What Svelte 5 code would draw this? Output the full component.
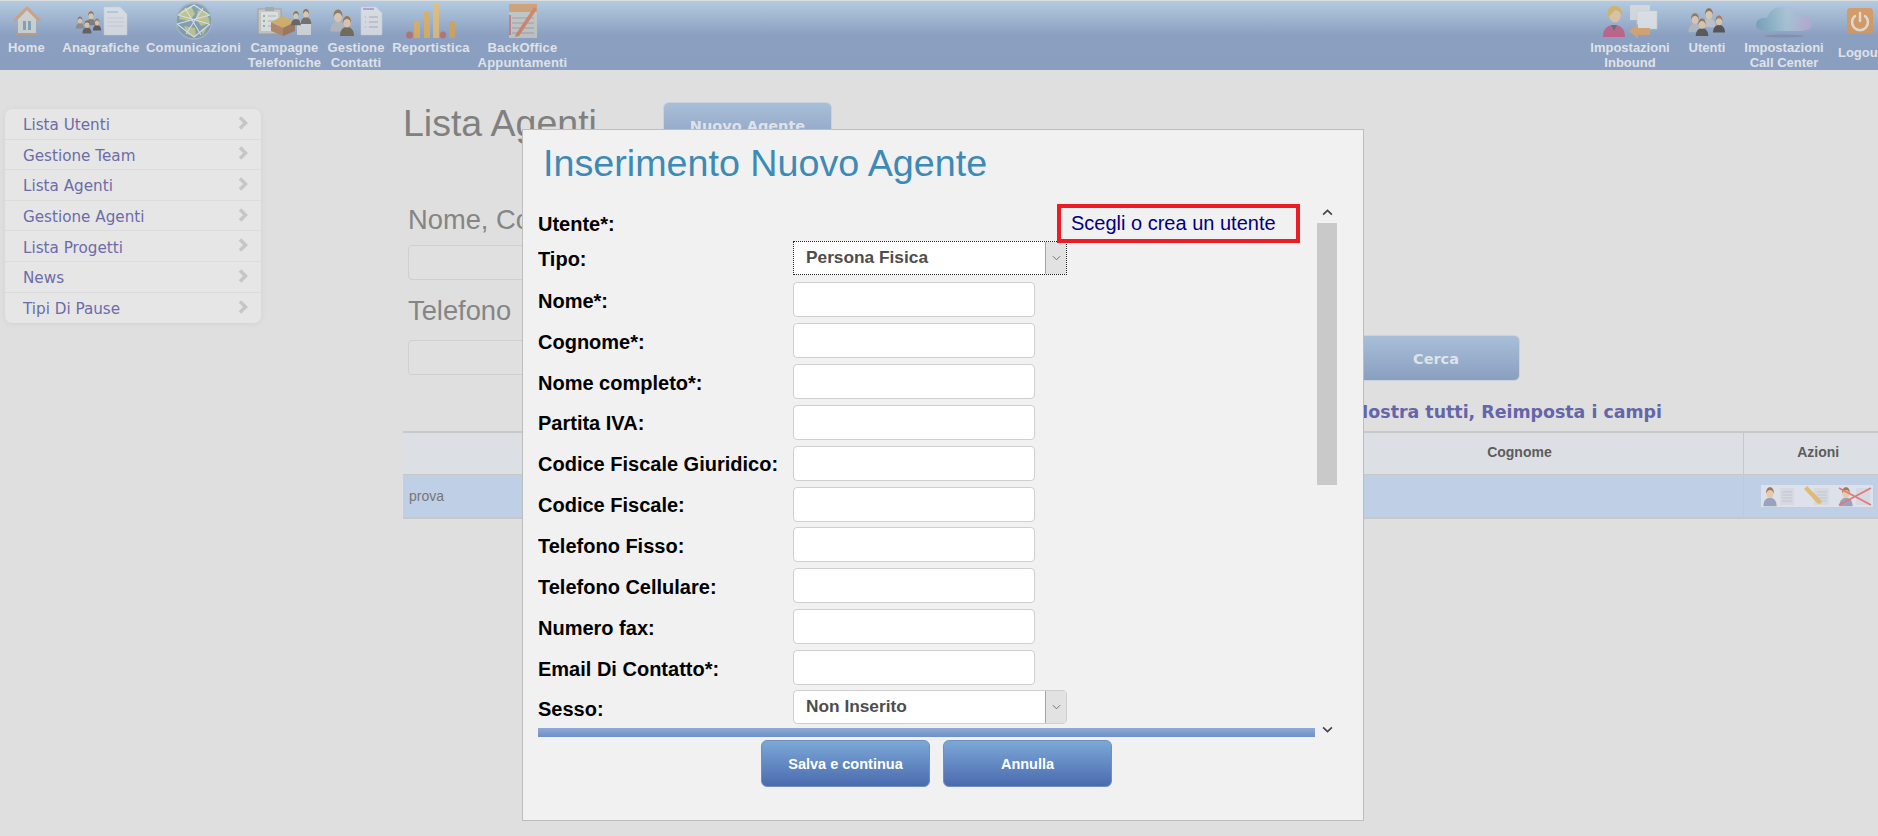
<script>
  const leftNav = [
    { id: 'home', label: ['Home'], width: 37, icon: 30, gap: 0 },
    { id: 'people-doc', label: ['Anagrafiche'], width: 78, icon: 54, gap: 17 },
    { id: 'globe', label: ['Comunicazioni'], width: 97, icon: 40, gap: 5 },
    { id: 'campaign', label: ['Campagne', 'Telefoniche'], width: 71, icon: 56, gap: 7 },
    { id: 'contacts', label: ['Gestione', 'Contatti'], width: 56, icon: 54, gap: 8 },
    { id: 'bars', label: ['Reportistica'], width: 76, icon: 50, gap: 9 },
    { id: 'notes', label: ['BackOffice', 'Appuntamenti'], width: 89, icon: 32, gap: 9 }
  ];
  const rightNav = [
    { id: 'inbound', label: ['Impostazioni', 'Inbound'], width: 82, icon: 56, gap: 0 },
    { id: 'users', label: ['Utenti'], width: 38, icon: 40, gap: 17 },
    { id: 'cloud', label: ['Impostazioni', 'Call Center'], width: 82, icon: 58, gap: 17 },
    { id: 'power', label: ['Logout'], width: 44, icon: 28, gap: 13 }
  ];
  const sideItems = ['Lista Utenti', 'Gestione Team', 'Lista Agenti', 'Gestione Agenti', 'Lista Progetti', 'News', 'Tipi Di Pause'];
  const textFields = ['Nome*:', 'Cognome*:', 'Nome completo*:', 'Partita IVA:', 'Codice Fiscale Giuridico:', 'Codice Fiscale:', 'Telefono Fisso:', 'Telefono Cellulare:', 'Numero fax:', 'Email Di Contatto*:'];
</script>

{#snippet person(x, y, s, hair, body)}
  <g transform="translate({x} {y}) scale({s})">
    <path d="M-7 16c0-6 3-9 7-9s7 3 7 9z" fill={body} />
    <ellipse cx="0" cy="3" rx="3.6" ry="4.4" fill="#e8c9a8" />
    <path d="M-4 3c-.5-5 2-7 4-7s4.500 2 4 7c-1-3-2-4-4-4s-3 1-4 4z" fill={hair} />
  </g>
{/snippet}

{#snippet doc(x, y, w, h)}
  <path d="M{x} {y}h{w - 7}l7 7v{h - 7}h-{w}z" fill="#e4e4e6" stroke="#cfd2d8" stroke-width=".6" />
  <path d="M{x + 3} {y + 5}h{w - 12}" stroke="#b6cbd6" stroke-width="2" />
  <path d="M{x + 3} {y + 11}h{w - 6}M{x + 3} {y + 15}h{w - 6}M{x + 3} {y + 19}h{w - 6}" stroke="#cfcfcf" stroke-width="1" />
{/snippet}

{#snippet icon(id)}
  {#if id === 'home'}
    <svg viewBox="0 0 30 30" class="glyph">
      <path d="M6 13v15h18V13L15 4z" fill="#d8d8d0" />
      <path d="M2 15 15 2l13 13" fill="none" stroke="#d99a6c" stroke-width="3" stroke-linejoin="round" />
      <rect x="11" y="15" width="3" height="9" fill="#7f9cb4" />
      <rect x="16" y="15" width="3" height="9" fill="#7f9cb4" />
      <rect x="4" y="27" width="22" height="2" fill="#c79a74" />
    </svg>
  {:else if id === 'people-doc'}
    <svg viewBox="0 0 54 30" class="glyph">
      {@render person(6, 13, .6, '#8a6a48', '#8d8478')}
      {@render person(17, 8, .7, '#8a6238', '#7a6f66')}
      {@render person(13, 17, .65, '#7a5a38', '#5a5048')}
      {@render person(23, 15, .6, '#a07040', '#4e473f')}
      {@render doc(30, 1, 23, 28)}
    </svg>
  {:else if id === 'globe'}
    <svg viewBox="0 0 40 38" class="glyph">
      <ellipse cx="20" cy="19" rx="18.500" ry="18.500" fill="#7d9aa8" />
      <path d="M7 9l10-5 4 8-6 7-10-2zM24 8l9 3 3 10-9 3-5-7zM10 24l11 2 1 9-9-3zM27 28l6-3-4 8z" fill="#c6c77c" />
      <path d="M4 13 20 3l15 10M3 22l17 13 16-13M4 13l31 9M36 13 3 22M11 6l16 27M29 6 12 32" fill="none" stroke="#e2eaf0" stroke-width="1.100" />
      <circle cx="20" cy="19" r="18" fill="none" stroke="#aab8c2" stroke-width="1.500" />
    </svg>
  {:else if id === 'campaign'}
    <svg viewBox="0 0 56 30" class="glyph">
      <rect x="1" y="3" width="23" height="25" fill="#cfcbbd" stroke="#9c9a90" stroke-width="1" />
      <rect x="4" y="6" width="17" height="19" fill="#e9e9e4" />
      <rect x="8" y="1" width="9" height="4" fill="#a8a49a" />
      <path d="M6 10h2M6 15h2M6 20h2" stroke="#79a868" stroke-width="1.500" />
      <path d="M11 10h8M11 15h8M11 20h8" stroke="#b0b0ac" />
      <path d="M14 16l12-6 12 6-12 6z" fill="#dcae4e" />
      <path d="M14 16v9l12 5v-8z" fill="#b77f52" />
      <path d="M38 16v9l-12 5v-8z" fill="#9f6b44" />
      <rect x="40" y="15" width="14" height="14" fill="#dcdcdc" />
      {@render person(39, 8, .7, '#7a5a38', '#5c544c')}
      {@render person(49, 6, .75, '#8a6238', '#6a6058')}
    </svg>
  {:else if id === 'contacts'}
    <svg viewBox="0 0 54 30" class="glyph">
      {@render person(9, 8, 1.100, '#8a6a48', '#b8b8b8')}
      {@render person(18, 14, 1, '#9a6a30', '#6a5c3e')}
      <path d="M32 1h15l6 6v22H32z" fill="#e4e4e6" stroke="#cfd2d8" stroke-width=".6" />
      <path d="M34 3h11" stroke="#b79ad0" stroke-width="2" />
      <path d="M36 11h1M36 16h1M36 21h1M40 11h9M40 16h9M40 21h9" stroke="#a8a8a8" />
    </svg>
  {:else if id === 'bars'}
    <svg viewBox="0 0 50 36" class="glyph">
      <ellipse cx="3.500" cy="32" rx="3.500" ry="3.500" fill="#b86a62" />
      <rect x="8" y="18" width="6" height="17" fill="#e3ad54" />
      <rect x="18" y="9" width="6" height="26" fill="#e3ad54" />
      <rect x="27" y="1" width="6" height="34" fill="#e8bd6c" />
      <ellipse cx="37" cy="32" rx="3" ry="3.500" fill="#b86a62" />
      <rect x="43" y="18" width="6" height="17" fill="#d9a24c" />
    </svg>
  {:else if id === 'notes'}
    <svg viewBox="0 0 32 36" class="glyph">
      <rect x="2" y="1" width="28" height="34" fill="#c9c9c4" />
      <rect x="2" y="1" width="28" height="8" fill="#d89a62" />
      <path d="M5 15h22M5 20h22M5 25h22M5 30h22" stroke="#9d9d9d" />
      <path d="M9 31 27 4l3 2-18 27-4 1z" fill="#d87a54" />
      <path d="M3 12v20" stroke="#c97a6a" stroke-width="2" />
    </svg>
  {:else if id === 'inbound'}
    <svg viewBox="0 0 56 34" class="glyph">
      <path d="M1 33c0-9 5-12 11-12s11 3 11 12z" fill="#c7567a" />
      <path d="M9 21l3 6 3-6z" fill="#5f5f64" />
      <ellipse cx="13" cy="11" rx="6" ry="7.500" fill="#e5c49f" />
      <path d="M6 14c-2-9 3-13 8-12s7 5 6 10c-2-4-4-6-7-6-2 3-5 4-7 8z" fill="#dcb04c" />
      <rect x="28" y="1" width="20" height="15" fill="#dedede" />
      <rect x="35" y="7" width="20" height="18" fill="#e8e8e8" stroke="#cfcfcf" stroke-width=".6" />
      <path d="M27 27l9-7v4h12v7H36v4z" fill="#e2a261" />
    </svg>
  {:else if id === 'users'}
    <svg viewBox="0 0 40 30" class="glyph">
      {@render person(8, 11, .95, '#8a6a48', '#b9b9bc')}
      {@render person(22, 6, .95, '#8a6238', '#c4c4c8')}
      {@render person(15, 16, .9, '#9a6a30', '#4e473f')}
      {@render person(32, 13, .85, '#a07040', '#45403a')}
    </svg>
  {:else if id === 'cloud'}
    <svg viewBox="0 0 58 34" class="glyph">
      <defs>
        <linearGradient id="cloudFill" x1="0" x2="1" y1="0" y2="0">
          <stop offset="0" stop-color="#6d9db4" />
          <stop offset=".55" stop-color="#a9c6d4" />
          <stop offset="1" stop-color="#b8a5d0" />
        </linearGradient>
      </defs>
      <path d="M1 21c0-5 5-8 11-7 3-7 8-11 15-11 8 0 13 4 15 9 9-1 15 3 15 9 0 4-6 6-14 6H14C6 27 1 25 1 21z" fill="url(#cloudFill)" />
      <ellipse cx="29" cy="32" rx="20" ry="1.500" fill="#76889f" opacity=".7" />
    </svg>
  {:else if id === 'power'}
    <svg viewBox="0 0 28 28" class="glyph">
      <rect x="1" y="1" width="26" height="26" rx="3" fill="#e0944c" />
      <path d="M9 9a8 8 0 1 0 10 0" fill="none" stroke="#f3e4d0" stroke-width="2.500" stroke-linecap="round" />
      <path d="M14 6v8" stroke="#f3e4d0" stroke-width="2.500" stroke-linecap="round" />
    </svg>
  {/if}
{/snippet}

{#snippet navItem(item)}
  <a class="nav-item" class:solo={item.id === 'power'} style="width:{item.width}px;margin-left:{item.gap}px">
    <span class="nav-icon" style="width:{item.icon}px">{@render icon(item.id)}</span>
    {#each item.label as line}
      <span class="nav-line">{line}</span>
    {/each}
  </a>
{/snippet}

<div class="page">
  <header class="topbar">
    <nav class="nav-group left">
      {#each leftNav as item}{@render navItem(item)}{/each}
    </nav>
    <nav class="nav-group right">
      {#each rightNav as item}{@render navItem(item)}{/each}
    </nav>
  </header>

  <div class="content">
    <aside class="sidebar">
      {#each sideItems as item}
        <a class="side-item">
          <span>{item}</span>
          <svg viewBox="0 0 10 14" class="chevron"><path d="M2 1.500 7.500 7 2 12.500" fill="none" stroke="#c6c6c6" stroke-width="3.500" /></svg>
        </a>
      {/each}
    </aside>

    <main class="main">
      <div class="heading">
        <h1>Lista Agenti</h1>
        <button class="soft-btn new-btn">Nuovo Agente</button>
      </div>

      <div class="search">
        <div class="search-fields">
          <label for="q-name">Nome, Cognome</label>
          <input id="q-name" class="soft-input" />
          <label for="q-phone" class="second">Telefono</label>
          <input id="q-phone" class="soft-input" />
        </div>
        <button class="soft-btn find-btn">Cerca</button>
      </div>

      <div class="links"><a>Mostra tutti,</a> <a>Reimposta i campi</a></div>

      <table class="results">
        <thead>
          <tr><th>Nome</th><th>Ragione Sociale</th><th>Cognome</th><th class="actions">Azioni</th></tr>
        </thead>
        <tbody>
          <tr>
            <td>prova</td><td></td><td></td>
            <td class="actions">
              <svg viewBox="0 0 112 22" class="row-icons">
                <rect width="112" height="22" fill="#dde2ea" />
                {@render person(9, 6, .95, '#9a7a58', '#9aa3bd')}
                <rect x="19" y="3" width="14" height="17" fill="#d6dae0" />
                <path d="M21 7h10M21 10h10M21 13h10M21 16h10" stroke="#bfc6d0" />
                <rect x="53" y="3" width="15" height="17" fill="#d6dae0" />
                <path d="M56 7h10M56 10h10M56 13h10M56 16h10" stroke="#bfc6d0" />
                <path d="M43 4l14 15 4-1-1-3L46 1z" fill="#e0bb78" />
                {@render person(85, 6, .95, '#9a7a58', '#9aa3bd')}
                <rect x="95" y="3" width="14" height="17" fill="#d6dae0" />
                <path d="M78 3l32 17M110 3 78 20" stroke="#e2787c" stroke-width="1.800" />
              </svg>
            </td>
          </tr>
        </tbody>
      </table>
    </main>
  </div>

  <section class="modal">
    <h2>Inserimento Nuovo Agente</h2>
    <div class="modal-body">
      <div class="form-wrap">
        <form class="form">
          <div class="row first">
            <span class="field-label">Utente*:</span>
            <a class="pick-user">Scegli o crea un utente</a>
          </div>
          <div class="row tipo">
            <span class="field-label">Tipo:</span>
            <div class="select focused">
              <span class="select-value">Persona Fisica</span>
              <span class="select-arrow"><svg viewBox="0 0 10 6"><path d="M1 1l4 4 4-4" fill="none" stroke="#666" /></svg></span>
            </div>
          </div>
          {#each textFields as field}
            <div class="row">
              <span class="field-label">{field}</span>
              <input class="text-input" />
            </div>
          {/each}
          <div class="row">
            <span class="field-label">Sesso:</span>
            <div class="select">
              <span class="select-value">Non Inserito</span>
              <span class="select-arrow"><svg viewBox="0 0 10 6"><path d="M1 1l4 4 4-4" fill="none" stroke="#666" /></svg></span>
            </div>
          </div>
        </form>
        <div class="blue-bar"></div>
      </div>
      <div class="scrollbar">
        <span class="scroll-arrow"><svg viewBox="0 0 10 6"><path d="M1 5l4-4 4 4" fill="none" stroke="#444" stroke-width="1.500" /></svg></span>
        <div class="scroll-thumb"></div>
        <span class="scroll-arrow end"><svg viewBox="0 0 10 6"><path d="M1 1l4 4 4-4" fill="none" stroke="#444" stroke-width="1.500" /></svg></span>
      </div>
    </div>
    <div class="modal-actions">
      <button class="primary">Salva e continua</button>
      <button class="primary">Annulla</button>
    </div>
  </section>
</div>

<style>
  :global(body) {
    margin: 0;
    background: #dfdfdf;
  }

  .page {
    position: relative;
    width: 1878px;
    height: 836px;
    overflow: hidden;
    background: #dfdfdf;
    font-family: "Liberation Sans", Arial, sans-serif;
  }

  .topbar {
    display: flex;
    justify-content: space-between;
    height: 69px;
    border-top: 1px solid #dcdcdc;
    background: linear-gradient(#b3cbe0 0, #8b9fc0 50%, #8a9ebf 100%);
  }

  .nav-group {
    display: flex;
  }

  .nav-group.left {
    padding-left: 8px;
  }

  .nav-group.left .nav-item {
    letter-spacing: .2px;
  }

  .nav-group.right {
    margin-right: -4px;
  }

  .nav-item {
    display: flex;
    flex-direction: column;
    align-items: center;
    flex-shrink: 0;
    color: #dfe2e8;
    font-size: 13px;
    font-weight: 700;
    line-height: 14.500px;
    white-space: nowrap;
  }

  .nav-item.solo .nav-line {
    margin-top: 5px;
  }

  .nav-icon {
    display: flex;
    align-items: center;
    justify-content: center;
    height: 40px;
    flex-shrink: 0;
  }

  .glyph {
    display: block;
    width: 100%;
    opacity: .78;
  }

  .content {
    display: flex;
    align-items: flex-start;
  }

  .sidebar {
    width: 256px;
    margin: 39px 0 0 5px;
    border-radius: 7px;
    background: #e6e6e6;
    box-shadow: 0 1px 6px rgba(0, 0, 0, .06);
    flex-shrink: 0;
  }

  .side-item {
    display: flex;
    align-items: center;
    justify-content: space-between;
    height: 30.600px;
    padding: 3px 13px 0 18px;
    border-bottom: 1px solid #dcdcdc;
    box-sizing: border-box;
    color: #6c6ca8;
    font-family: "DejaVu Sans", Verdana, sans-serif;
    font-size: 15.200px;
  }

  .side-item:last-child {
    border-bottom: 0;
  }

  .chevron {
    width: 10px;
    height: 14px;
    margin-top: -5px;
  }

  .main {
    margin: 32px 0 0 142px;
    flex-shrink: 0;
    width: 1490px;
  }

  .heading {
    display: flex;
    align-items: flex-start;
  }

  h1 {
    width: 260px;
    margin: 0;
    color: #808080;
    font-size: 37.500px;
    font-weight: 400;
    line-height: 42px;
  }

  .soft-btn {
    height: 46px;
    padding: 2px 0 0;
    border: 1px solid #c9d2de;
    border-radius: 6px;
    background: linear-gradient(#a8bfd8, #8a9fc0);
    color: #dfe2e8;
    font-family: "DejaVu Sans", Verdana, sans-serif;
    font-size: 14.500px;
    font-weight: 700;
  }

  .new-btn {
    width: 169px;
  }

  .search {
    display: flex;
    align-items: flex-start;
    margin-top: 57px;
  }

  .search-fields {
    display: flex;
    flex-direction: column;
    width: 949px;
    padding-left: 5px;
    box-sizing: border-box;
  }

  .search-fields label {
    color: #858585;
    font-size: 27.300px;
    line-height: 30px;
    margin-bottom: 10px;
  }

  .search-fields label.second {
    margin-top: 16px;
    margin-bottom: 14px;
  }

  .soft-input {
    width: 300px;
    height: 35px;
    box-sizing: border-box;
    border: 1px solid #d0d0d0;
    border-radius: 4px;
    background: #e0e0e0;
  }

  .find-btn {
    width: 168px;
    margin-top: 130px;
  }

  .links {
    margin: 20px 0 0;
    width: 1259px;
    color: #6565a9;
    font-family: "DejaVu Sans", Verdana, sans-serif;
    font-size: 17.400px;
    font-weight: 700;
    line-height: 22px;
    text-align: right;
  }

  .results {
    width: 1490px;
    margin-top: 8px;
    border-collapse: collapse;
    table-layout: fixed;
    border-top: 2px solid #c8c8c8;
    border-bottom: 2px solid #c8c8c8;
  }

  .results th {
    height: 42px;
    padding: 0 0 2px;
    background: #dce0e5;
    border-bottom: 1px solid #c8c8c8;
    color: #5c5c5c;
    font-size: 14px;
    box-sizing: border-box;
  }

  .results td {
    height: 42px;
    padding: 0 6px;
    background: #bfcfe5;
    color: #777;
    font-size: 14px;
  }

  .results .actions {
    width: 150px;
    padding-left: 0;
    padding-right: 0;
    border-left: 1px solid #c8c8c8;
  }

  .row-icons {
    display: block;
    width: 112px;
    height: 22px;
    margin-left: 17px;
  }

  .modal {
    position: absolute;
    left: 522px;
    top: 129px;
    width: 842px;
    height: 692px;
    box-sizing: border-box;
    padding: 12px 0 0 15px;
    border: 1px solid #bdbdbd;
    background: #f1f1f1;
  }

  .modal h2 {
    margin: 0 0 17px 5px;
    color: #3c8ab5;
    font-size: 37.700px;
    font-weight: 400;
    line-height: 42px;
  }

  .modal-body {
    display: flex;
    align-items: flex-start;
  }

  .form-wrap {
    width: 777px;
  }

  .form {
    height: 527px;
    padding-top: 3px;
    box-sizing: border-box;
    overflow: hidden;
  }

  .row {
    display: grid;
    grid-template-columns: 255px auto;
    justify-content: start;
    align-items: center;
    height: 40.850px;
  }

  .row.first {
    display: flex;
    justify-content: space-between;
    height: 37.500px;
    align-items: flex-start;
  }

  .row.tipo {
    height: 38px;
    align-items: start;
  }

  .row.tipo .select {
    margin-top: -1px;
  }

  .field-label {
    padding-top: 3px;
    color: #000;
    font-size: 20px;
    font-weight: 700;
    line-height: 23px;
    white-space: nowrap;
  }

  .row.first .field-label {
    padding-top: 9px;
  }

  .row.tipo .field-label {
    padding-top: 6px;
  }

  .pick-user {
    position: relative;
    z-index: 1;
    width: 243px;
    height: 39px;
    margin-right: 15px;
    box-sizing: border-box;
    padding-left: 10px;
    border: 4px solid #ed1c24;
    background: #f1f1f1;
    color: #000080;
    font-size: 20px;
    line-height: 31px;
  }

  .text-input {
    width: 242px;
    height: 35px;
    box-sizing: border-box;
    border: 1px solid #cfcfcf;
    border-radius: 4px;
    background: #fff;
  }

  .select {
    display: flex;
    width: 274px;
    height: 34px;
    box-sizing: border-box;
    border: 1px solid #cfcfcf;
    border-radius: 4px;
    background: #fff;
    color: #4d4d4d;
    font-size: 17.300px;
    font-weight: 700;
    line-height: 30px;
  }

  .row:last-child .select {
    margin-top: -2px;
  }

  .select.focused {
    border: 1px dotted #222;
    border-radius: 0;
  }

  .select-value {
    flex: 1;
    padding-left: 12px;
  }

  .select-arrow {
    display: flex;
    align-items: center;
    justify-content: center;
    width: 20px;
    border-left: 1px solid #a5a5a5;
    background: #e2e2e2;
  }

  .select-arrow svg {
    width: 9px;
    height: 6px;
  }

  .blue-bar {
    height: 9px;
    background: linear-gradient(#8eaad6, #6e90c8);
  }

  .scrollbar {
    display: flex;
    flex-direction: column;
    width: 20px;
    height: 539px;
    margin-left: 2px;
    background: #f1f1f1;
  }

  .scroll-arrow {
    display: flex;
    align-items: center;
    justify-content: center;
    height: 22px;
  }

  .scroll-arrow svg {
    width: 11px;
    height: 7px;
  }

  .scroll-arrow.end {
    margin-top: auto;
  }

  .scroll-thumb {
    height: 262px;
    background: #c9c9c9;
  }

  .modal-actions {
    display: flex;
    gap: 13px;
    margin: 0 0 0 223px;
  }

  .primary {
    width: 169px;
    height: 47px;
    border: 1px solid #6f8fc0;
    border-radius: 6px;
    background: linear-gradient(#7ca8d8, #4a6bae);
    color: #fff;
    font-family: "Liberation Sans", Arial, sans-serif;
    font-size: 14.500px;
    font-weight: 700;
  }
</style>
